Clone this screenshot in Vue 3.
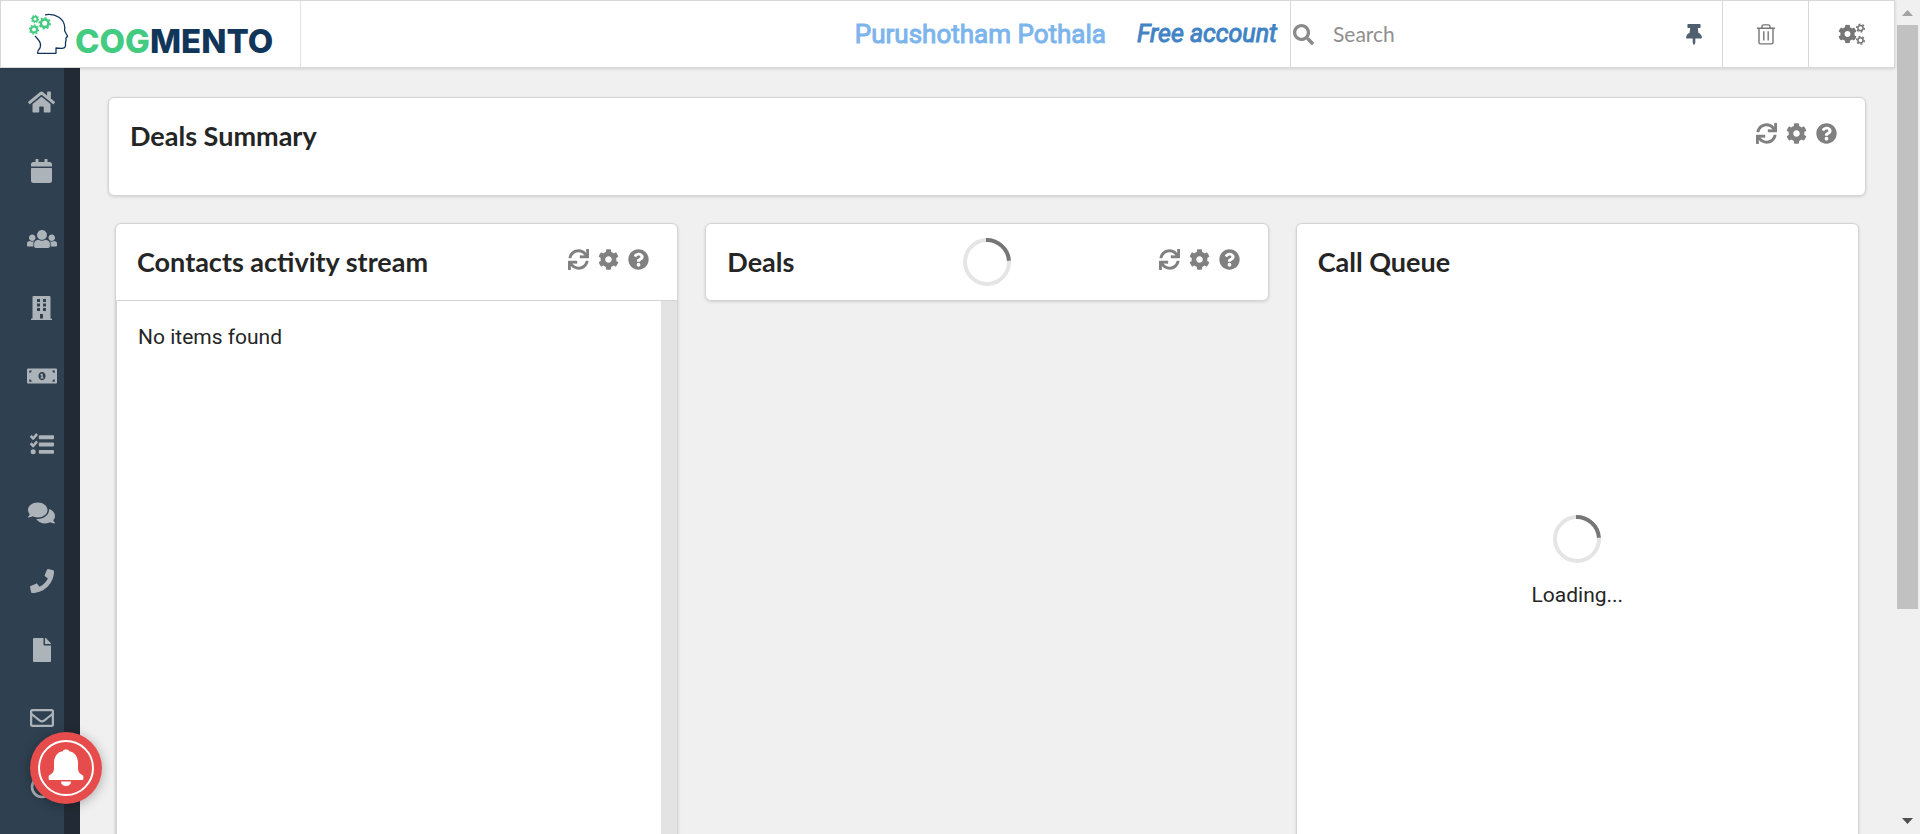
<script setup>
import { ref } from 'vue'

const cog =
  'M444.788 291.1l42.616 24.599c4.867 2.809 7.126 8.618 5.459 13.985-11.07 35.642-29.97 67.842-54.689 94.586a12.016 12.016 0 0 1-14.832 2.254l-42.584-24.595a191.577 191.577 0 0 1-60.759 35.13v49.182a12.01 12.01 0 0 1-9.377 11.718c-34.956 7.85-72.499 8.256-109.219.007-5.49-1.233-9.403-6.096-9.403-11.723v-49.184a191.555 191.555 0 0 1-60.759-35.13l-42.584 24.595a12.016 12.016 0 0 1-14.832-2.254c-24.718-26.744-43.619-58.944-54.689-94.586-1.667-5.366.592-11.175 5.459-13.985L67.212 291.1a193.48 193.48 0 0 1 0-70.199l-42.616-24.599c-4.867-2.809-7.126-8.618-5.459-13.985 11.07-35.642 29.97-67.842 54.689-94.586a12.016 12.016 0 0 1 14.832-2.254l42.584 24.595a191.577 191.577 0 0 1 60.759-35.13V25.759a12.01 12.01 0 0 1 9.377-11.718c34.956-7.85 72.499-8.256 109.219-.007 5.49 1.233 9.403 6.096 9.403 11.723v49.184a191.555 191.555 0 0 1 60.759 35.13l42.584-24.595a12.016 12.016 0 0 1 14.832 2.254c24.718 26.744 43.619 58.944 54.689 94.586 1.667 5.366-.592 11.175-5.459 13.985L444.788 220.9a193.485 193.485 0 0 1 0 70.2zM336 256c0-44.112-35.888-80-80-80s-80 35.888-80 80 35.888 80 80 80 80-35.888 80-80z'

const tools = [
  {
    label: 'Refresh',
    path: 'M440.935 12.574l3.966 82.766C399.416 41.904 331.674 8 256 8 134.813 8 33.933 94.924 12.296 209.824 10.908 217.193 16.604 224 24.103 224h49.084c5.57 0 10.377-3.842 11.676-9.259C103.407 137.408 172.931 80 256 80c60.893 0 114.512 30.856 146.104 77.801l-101.53-4.865c-6.845-.328-12.574 5.133-12.574 11.986v47.411c0 6.627 5.373 12 12 12h200.333c6.627 0 12-5.373 12-12V12c0-6.627-5.373-12-12-12h-47.411c-6.853 0-12.315 5.729-11.987 12.574zM256 432c-60.895 0-114.517-30.858-146.109-77.805l101.868 4.871c6.845.327 12.573-5.134 12.573-11.986v-47.412c0-6.627-5.373-12-12-12H12c-6.627 0-12 5.373-12 12V500c0 6.627 5.373 12 12 12h47.385c6.863 0 12.328-5.745 11.985-12.599l-4.129-82.575C112.725 470.166 180.405 504 256 504c121.187 0 222.067-86.924 243.704-201.824 1.388-7.369-4.308-14.176-11.807-14.176h-49.084c-5.57 0-10.377 3.842-11.676 9.259C408.593 374.592 339.069 432 256 432z'
  },
  { label: 'Settings', path: cog },
  {
    label: 'Help',
    path: 'M504 256c0 136.997-111.043 248-248 248S8 392.997 8 256C8 119.083 119.043 8 256 8s248 111.083 248 248zM262.655 90c-54.497 0-89.255 22.957-116.549 63.758-3.536 5.286-2.353 12.415 2.715 16.258l34.699 26.31c5.205 3.947 12.621 3.008 16.665-2.122 17.864-22.658 30.113-35.797 57.303-35.797 20.429 0 45.698 13.148 45.698 32.958 0 14.976-12.363 22.667-32.534 33.976C247.128 238.528 216 254.941 216 296v4c0 6.627 5.373 12 12 12h56c6.627 0 12-5.373 12-12v-1.333c0-28.462 83.186-29.647 83.186-106.667 0-58.002-60.165-102-116.531-102zM256 338c-25.365 0-46 20.635-46 46 0 25.364 20.635 46 46 46s46-20.636 46-46c0-25.365-20.635-46-46-46z'
  }
]

const nav = [
  {
    label: 'Home',
    w: 576,
    path: 'M280.37 148.26L96 300.11V464a16 16 0 0 0 16 16l112.06-.29a16 16 0 0 0 15.92-16V368a16 16 0 0 1 16-16h64a16 16 0 0 1 16 16v95.64a16 16 0 0 0 16 16.05L464 480a16 16 0 0 0 16-16V300L295.67 148.26a12.19 12.19 0 0 0-15.3 0zM571.6 251.47L488 182.56V44.05a12 12 0 0 0-12-12h-56a12 12 0 0 0-12 12v72.61L318.47 43a48 48 0 0 0-61 0L4.34 251.47a12 12 0 0 0-1.6 16.9l25.5 31A12 12 0 0 0 45.15 301l235.22-193.74a12.19 12.19 0 0 1 15.3 0L530.9 301a12 12 0 0 0 16.9-1.6l25.5-31a12 12 0 0 0-1.7-16.93z'
  },
  {
    label: 'Calendar',
    w: 448,
    path: 'M12 192h424c6.6 0 12 5.4 12 12v260c0 26.5-21.5 48-48 48H48c-26.5 0-48-21.5-48-48V204c0-6.6 5.4-12 12-12zm436-44v-36c0-26.5-21.5-48-48-48h-48V12c0-6.6-5.4-12-12-12h-40c-6.6 0-12 5.4-12 12v52H160V12c0-6.6-5.4-12-12-12h-40c-6.6 0-12 5.4-12 12v52H48C21.5 64 0 85.5 0 112v36c0 6.6 5.4 12 12 12h424c6.6 0 12-5.4 12-12z'
  },
  {
    label: 'Contacts',
    w: 640,
    path: 'M320 64c57.99 0 105 47.01 105 105s-47.01 105-105 105-105-47.01-105-105S262.01 64 320 64zm113.463 217.366l-39.982-9.996c-49.168 35.365-108.766 27.473-146.961 0l-39.982 9.996C174.485 289.379 152 318.177 152 351.216V412c0 19.882 16.118 36 36 36h264c19.882 0 36-16.118 36-36v-60.784c0-33.039-22.485-61.837-54.537-69.85zM528 300c38.66 0 70-31.34 70-70s-31.34-70-70-70-70 31.34-70 70 31.34 70 70 70zm-416 0c38.66 0 70-31.34 70-70s-31.34-70-70-70-70 31.34-70 70 31.34 70 70 70zm24 112v-60.784c0-16.551 4.593-32.204 12.703-45.599-29.988 14.72-63.336 8.708-85.69-7.37l-26.655 6.664C14.99 310.252 0 329.452 0 351.477V392c0 13.255 10.745 24 24 24h112.169a52.417 52.417 0 0 1-.169-4zm467.642-107.09l-26.655-6.664c-27.925 20.086-60.89 19.399-85.786 8.218C499.369 319.893 504 335.39 504 351.216V412c0 1.347-.068 2.678-.169 4H616c13.255 0 24-10.745 24-24v-40.523c0-22.025-14.99-41.225-36.358-46.567z'
  },
  {
    label: 'Companies',
    w: 448,
    path: 'M436 480h-20V24c0-13-11-24-24-24H56C43 0 32 11 32 24v456H12c-7 0-12 5-12 12v20h448v-20c0-7-5-12-12-12zM128 64h64v64h-64zM256 64h64v64h-64zM128 160h64v64h-64zM256 160h64v64h-64zM128 256h64v64h-64zM256 256h64v64h-64zM192 384h64v96h-64z'
  },
  {
    label: 'Deals',
    w: 640,
    path: 'M24 96h592a24 24 0 0 1 24 24v272a24 24 0 0 1-24 24H24a24 24 0 0 1-24-24V120a24 24 0 0 1 24-24zM48 136v52c29 0 52-23 52-52zM540 136c0 29 23 52 52 52v-52zM48 324v52h52c0-29-23-52-52-52zM592 324c-29 0-52 23-52 52h52zM320 168c-44 0-76 40-76 88s32 88 76 88 76-40 76-88-32-88-76-88zM302 206h34v80h18v24h-68v-24h18v-48h-18v-20z'
  },
  {
    label: 'Tasks',
    w: 512,
    path: 'M206 68h288c10 0 18 8 18 18v50c0 10-8 18-18 18H206c-10 0-18-8-18-18V86c0-10 8-18 18-18zM206 226h288c10 0 18 8 18 18v46c0 10-8 18-18 18H206c-10 0-18-8-18-18v-46c0-10 8-18 18-18zM206 384h288c10 0 18 8 18 18v46c0 10-8 18-18 18H206c-10 0-18-8-18-18v-46c0-10 8-18 18-18zM68 368a54 54 0 1 1 0 108 54 54 0 0 1 0-108zM57 166L4 113c-6-6-6-14 0-20l20-20c6-6 14-6 20 0l24 24 54-64c6-6 14-6 20 0l20 20c6 6 6 14 0 20l-82 93c-7 7-16 7-23 0zM57 324L4 271c-6-6-6-14 0-20l20-20c6-6 14-6 20 0l24 24 54-64c6-6 14-6 20 0l20 20c6 6 6 14 0 20l-82 93c-7 7-16 7-23 0z'
  },
  {
    label: 'Conversations',
    w: 576,
    path: 'M416 192c0-88.4-93.1-160-208-160S0 103.6 0 192c0 34.3 14.1 65.9 38 92-13.4 30.2-35.5 54.2-35.8 54.5-2.2 2.3-2.8 5.7-1.5 8.7S4.8 352 8 352c36.6 0 66.9-12.3 88.7-25 32.2 15.7 70.3 25 111.3 25 114.9 0 208-71.6 208-160zm122 220c23.9-26 38-57.7 38-92 0-66.9-53.5-124.2-129.3-148.1.9 6.6 1.3 13.3 1.3 20.1 0 105.9-107.7 192-240 192-10.8 0-21.3-.8-31.7-1.9C207.8 439.6 281.8 480 368 480c41 0 79.1-9.2 111.3-25 21.8 12.7 52.1 25 88.7 25 3.2 0 6.1-1.9 7.3-4.8 1.3-2.9.7-6.3-1.5-8.7-.3-.3-22.4-24.2-35.8-54.5z'
  },
  {
    label: 'Calls',
    w: 512,
    path: 'M493.4 24.6l-104-24c-11.3-2.6-22.9 3.3-27.5 13.9l-48 112c-4.2 9.8-1.4 21.3 6.9 28l60.6 49.6c-36 76.7-98.9 140.5-177.2 177.2l-49.6-60.6c-6.8-8.3-18.2-11.1-28-6.9l-112 48C3.9 366.5-2 378.1.6 389.4l24 104C27.1 504.2 36.7 512 48 512c256.1 0 464-207.5 464-464 0-11.2-7.7-20.9-18.6-23.4z'
  },
  {
    label: 'Documents',
    w: 384,
    path: 'M224 136V0H24C10.7 0 0 10.7 0 24v464c0 13.3 10.7 24 24 24h336c13.3 0 24-10.7 24-24V160H248c-13.2 0-24-10.8-24-24zm160-14.1v6.1H256V0h6.1c6.4 0 12.5 2.5 17 7l97.9 98c4.5 4.5 7 10.6 7 16.9z'
  },
  {
    label: 'Email',
    w: 512,
    path: 'M464 64H48C21.49 64 0 85.49 0 112v288c0 26.51 21.49 48 48 48h416c26.51 0 48-21.49 48-48V112c0-26.51-21.49-48-48-48zm0 48v40.805c-22.422 18.259-58.168 46.651-134.587 106.49-16.841 13.247-50.201 45.072-73.413 44.701-23.208.375-56.579-31.459-73.413-44.701C106.18 199.465 70.425 171.067 48 152.805V112h416zM48 400V214.398c22.914 18.251 55.409 43.862 104.938 82.646 21.857 17.205 60.134 55.186 103.062 54.955 42.717.231 80.509-37.199 103.053-54.947 49.528-38.783 82.032-64.401 104.947-82.653V400H48z'
  },
  {
    label: 'Campaigns',
    w: 512,
    path: 'M256 16a240 240 0 1 0 0 480 240 240 0 0 0 0-480zM256 72a184 184 0 1 1 0 368 184 184 0 0 1 0-368zM256 144a112 112 0 1 0 0 224 112 112 0 0 0 0-224z'
  }
]

const gears = [
  { x: 35, y: 19, r: 2.4, w: 1.8, teeth: 8 },
  { x: 44.7, y: 23.3, r: 3.8, w: 2.6, teeth: 8 },
  { x: 34, y: 29.5, r: 3, w: 2.2, teeth: 8 }
]

const query = ref('')
</script>

<template>
  <div class="page">
    <div class="app">
      <header class="topbar">
        <a class="brand" href="#">
          <svg class="brand-mark" viewBox="28 12 42 44" aria-hidden="true">
            <path
              d="M45 14.8C56 13 64.500 19 64.700 27.500V31L67.600 36.200 66 38V40.500L65.500 42.500V46Q65 48.600 61 48.300L56 48V53.300H37.500Q37.800 50 40 48 41.500 43.500 38.500 40L35 35.800"
              fill="none"
              stroke="#12365a"
              stroke-width="1.3"
              stroke-linejoin="round"
            />
            <g v-for="(g, i) in gears" :key="i" fill="none" stroke="#42cb81">
              <circle :cx="g.x" :cy="g.y" :r="g.r" :stroke-width="g.w" />
              <circle
                :cx="g.x"
                :cy="g.y"
                :r="g.r + g.w / 2 + 0.4"
                :stroke-width="g.w * 0.6"
                :pathLength="g.teeth * 2"
                stroke-dasharray="1"
              />
            </g>
          </svg>
          <span class="brand-name"><span class="brand-green">COG</span>MENTO</span>
        </a>
        <div class="account">
          <span class="user">Purushotham Pothala</span>
          <a class="plan" href="#">Free account</a>
        </div>
        <form class="search" @submit.prevent>
          <svg class="search-icon" viewBox="0 0 512 512" aria-hidden="true">
            <path d="M505 442.7L405.3 343c-4.5-4.5-10.6-7-17-7H372c27.6-35.3 44-79.7 44-128C416 93.1 322.9 0 208 0S0 93.1 0 208s93.1 208 208 208c48.3 0 92.7-16.4 128-44v16.3c0 6.4 2.5 12.5 7 17l99.7 99.7c9.4 9.4 24.6 9.4 33.9 0l28.3-28.3c9.4-9.4 9.4-24.6.1-34zM208 336c-70.7 0-128-57.2-128-128 0-70.7 57.2-128 128-128 70.7 0 128 57.2 128 128 0 70.7-57.2 128-128 128z" />
          </svg>
          <input v-model="query" type="text" placeholder="Search" aria-label="Search" />
          <button class="pin" type="button" aria-label="Pin">
            <svg viewBox="0 0 384 512" aria-hidden="true">
              <path d="M298.028 214.267L285.793 96H328c13.255 0 24-10.745 24-24V24c0-13.255-10.745-24-24-24H56C42.745 0 32 10.745 32 24v48c0 13.255 10.745 24 24 24h42.207L85.972 214.267C37.465 236.82 0 277.261 0 328c0 13.255 10.745 24 24 24h136v104.007c0 1.242.289 2.467.845 3.578l24 48c2.941 5.882 11.364 5.893 14.311 0l24-48a8.008 8.008 0 0 0 .845-3.578V352h136c13.255 0 24-10.745 24-24-.001-51.183-37.983-91.42-85.973-113.733z" />
            </svg>
          </button>
        </form>
        <button class="bar-button" type="button" aria-label="Trash">
          <svg class="trash" viewBox="0 0 18 21" aria-hidden="true">
            <path d="M0 4.300H18M5 4V2.500Q5 .9 6.800 .9H11.200Q13 .9 13 2.500V4M2 4.500V18.500Q2 19.900 3.300 19.900H14.700Q16 19.900 16 18.500V4.500M6.800 7.300V16.500M11.200 7.300V16.500" fill="none" stroke="#767676" stroke-width="1.4" />
          </svg>
        </button>
        <button class="bar-button" type="button" aria-label="Settings">
          <svg class="cogs" viewBox="0 0 27 22" aria-hidden="true">
            <svg x="0" y="1.5" width="19" height="19" viewBox="0 0 512 512"><path :d="cog" /></svg>
            <g fill="none" stroke="#767676">
              <circle cx="22.500" cy="5" r="2.600" stroke-width="1.500" />
              <circle cx="22.500" cy="5" r="3.900" stroke-width="1.300" pathLength="12" stroke-dasharray="1" />
              <circle cx="22.500" cy="17.300" r="2.600" stroke-width="1.500" />
              <circle cx="22.500" cy="17.300" r="3.900" stroke-width="1.300" pathLength="12" stroke-dasharray="1" />
            </g>
          </svg>
        </button>
      </header>

      <div class="body">
        <nav class="sidebar" aria-label="Main">
          <ul class="menu">
            <li v-for="item in nav" :key="item.label">
              <a href="#" :aria-label="item.label">
                <svg :viewBox="`0 0 ${item.w} 512`" height="24" aria-hidden="true">
                  <path :d="item.path" fill-rule="evenodd" />
                </svg>
              </a>
            </li>
          </ul>
        </nav>

        <main class="content">
          <section class="card summary">
            <div class="card-head">
              <h2>Deals Summary</h2>
              <div class="tools">
                <button v-for="t in tools" :key="t.label" type="button" :aria-label="t.label">
                  <svg viewBox="0 0 512 512" aria-hidden="true"><path :d="t.path" /></svg>
                </button>
              </div>
            </div>
          </section>

          <div class="columns">
            <section class="card tall">
              <div class="card-head">
                <h2>Contacts activity stream</h2>
                <div class="tools">
                  <button v-for="t in tools" :key="t.label" type="button" :aria-label="t.label">
                    <svg viewBox="0 0 512 512" aria-hidden="true"><path :d="t.path" /></svg>
                  </button>
                </div>
              </div>
              <div class="stream">
                <p>No items found</p>
                <div class="stream-track"></div>
              </div>
            </section>

            <section class="card">
              <div class="card-head">
                <h2>Deals</h2>
                <div class="tools">
                  <button v-for="t in tools" :key="t.label" type="button" :aria-label="t.label">
                    <svg viewBox="0 0 512 512" aria-hidden="true"><path :d="t.path" /></svg>
                  </button>
                </div>
              </div>
              <div class="overlay"><span class="spinner"></span></div>
            </section>

            <section class="card tall">
              <div class="card-head">
                <h2>Call Queue</h2>
              </div>
              <div class="loading">
                <span class="spinner"></span>
                <p>Loading...</p>
              </div>
            </section>
          </div>
        </main>
      </div>
    </div>

    <div class="scrollbar" aria-hidden="true">
      <svg viewBox="0 0 25 25"><path d="M7 16L12.500 10 18 16z" fill="#a3a3a3" /></svg>
      <div class="scroll-track"><div class="scroll-thumb"></div></div>
      <svg viewBox="0 0 25 25"><path d="M7 9L12.500 15 18 9z" fill="#505050" /></svg>
    </div>

    <button class="bell" type="button" aria-label="Notifications">
      <svg viewBox="0 0 72 72" aria-hidden="true">
        <circle cx="36" cy="36" r="27" fill="none" stroke="#fff" stroke-width="2" />
        <path d="M36 17.500c-2 0-2.800.7-3.200 1.700C27 20 24 25 24 31v5c0 4-1.500 5.500-5 7.500-.6.5-.4 4 0 4.500h34c.5-.5.600-4 0-4.500-3.500-2-5-3.500-5-7.500v-5c0-6-3-11-8.800-11.800-.4-1-1.200-1.700-3.200-1.700zM31 49.500h10c0 2.800-2 4.500-5 4.500s-5-1.700-5-4.500z" fill="#fff" />
      </svg>
    </button>
  </div>
</template>

<style>
body {
  margin: 0;
  background: #f0f0f0;
}
</style>

<style scoped>
.page {
  display: flex;
  height: 100vh;
  overflow: hidden;
  background: #f0f0f0;
  color: #252525;
  font-family: Roboto, "Liberation Sans", sans-serif;
  font-size: 21px;
  line-height: 30px;
}

.page *,
.page *::before {
  box-sizing: border-box;
}

button {
  padding: 0;
  border: 0;
  background: none;
  cursor: pointer;
}

svg {
  display: block;
  flex: none;
}

a {
  color: inherit;
  text-decoration: none;
}

.app {
  display: flex;
  flex: 1;
  flex-direction: column;
  min-width: 0;
}

.topbar {
  position: relative;
  z-index: 1;
  display: flex;
  flex: none;
  height: 68px;
  border: 1px solid #d8d8d8;
  background: #fff;
  box-shadow: 0 1px 3px rgba(34, 36, 38, 0.15);
}

.brand {
  display: flex;
  align-items: center;
  gap: 5px;
  width: 300px;
  padding-left: 27px;
  border-right: 1px solid #e2e2e2;
}

.brand-mark {
  width: 42px;
  height: 44px;
}

.brand-name {
  padding-top: 14px;
  color: #12365a;
  font: 800 33px/40px Inter, sans-serif;
}

.brand-green {
  color: #42cb81;
}

.account {
  display: flex;
  flex: 1;
  align-items: center;
  justify-content: flex-end;
  gap: 31px;
  padding-right: 13px;
  font-size: 26px;
  white-space: nowrap;
  -webkit-text-stroke: 1px currentColor;
}

.user {
  color: #7cb5ec;
}

.plan {
  color: #4183c4;
  font-size: 25px;
  font-style: italic;
}

.search {
  display: flex;
  align-items: center;
  width: 432px;
  border-left: 1px solid #d8d8d8;
}

.search-icon {
  width: 21px;
  height: 21px;
  margin-left: 2px;
  fill: #8a8a8a;
}

input {
  flex: 1;
  min-width: 0;
  height: 40px;
  padding: 0 19px 2px;
  border: 0;
  outline: 0;
  background: none;
  color: #252525;
  font: 21px/30px Lato, sans-serif;
}

input::placeholder {
  color: #8f8f8f;
  opacity: 1;
}

.pin {
  margin-right: 20px;
}

.pin svg {
  width: 16px;
  height: 21px;
  fill: #4f5f6f;
}

.bar-button {
  display: flex;
  align-items: center;
  justify-content: center;
  width: 86px;
  border-left: 1px solid #d8d8d8;
}

.trash {
  width: 18px;
  height: 21px;
}

.cogs {
  width: 27px;
  height: 22px;
  fill: #767676;
}

.body {
  display: flex;
  flex: 1;
  min-height: 0;
}

.sidebar {
  display: flex;
  width: 80px;
  padding-bottom: 13px;
  background: linear-gradient(to right, #2f4050 64px, #222b35 64px);
}

.menu {
  display: flex;
  flex: 1;
  flex-direction: column;
  margin: 0;
  padding: 0;
  list-style: none;
}

.menu li {
  display: flex;
  flex: 1;
}

.menu a {
  display: flex;
  flex: 1;
  align-items: center;
  justify-content: center;
  padding-left: 3px;
}

.menu svg {
  fill: #acb3b9;
}

.content {
  flex: 1;
  min-width: 0;
  padding: 29px 29px 0 28px;
  overflow: hidden;
}

.card {
  position: relative;
  border: 1px solid #d4d4d5;
  border-radius: 6px;
  background: #fff;
  box-shadow: 0 1px 3px rgba(34, 36, 38, 0.15);
}

.summary {
  min-height: 99px;
  margin-bottom: 27px;
}

.card-head {
  display: flex;
  justify-content: space-between;
  height: 76px;
  padding: 0 28px 0 21px;
}

h2 {
  margin: 0;
  padding-top: 21px;
  font: 700 27px/34px Lato, sans-serif;
  white-space: nowrap;
}

.tools {
  display: flex;
  align-items: flex-start;
  gap: 9px;
  padding-top: 25px;
}

.tools svg {
  width: 21px;
  height: 21px;
  fill: #808080;
}

.columns {
  display: grid;
  grid-template-columns: repeat(3, 1fr);
  align-items: start;
  gap: 27px;
  padding: 0 7px;
}

.tall {
  display: flex;
  flex-direction: column;
  min-height: 100vh;
}

.stream {
  display: flex;
  flex: 1;
  justify-content: space-between;
  border-top: 1px solid #d4d4d5;
  border-left: 1px solid #d4d4d5;
}

.stream p {
  margin: 0;
  padding: 21px;
}

.stream-track {
  width: 16px;
  background: #e3e3e3;
}

.overlay {
  position: absolute;
  inset: 0;
  display: flex;
  align-items: center;
  justify-content: center;
  pointer-events: none;
}

.spinner {
  width: 48px;
  height: 48px;
  border: 4px solid #e5e5e5;
  border-top-color: #767676;
  border-radius: 50%;
  transform: rotate(42deg);
}

.loading {
  display: flex;
  flex-direction: column;
  align-items: center;
  gap: 17px;
  padding-top: 215px;
}

.loading p {
  margin: 0;
}

.scrollbar {
  display: flex;
  flex: none;
  flex-direction: column;
  width: 25px;
  background: #f0f0f0;
}

.scrollbar svg {
  width: 25px;
  height: 25px;
}

.scroll-track {
  flex: 1;
  padding: 0 2px;
}

.scroll-thumb {
  height: 74.5%;
  background: #c1c1c1;
}

.bell {
  position: fixed;
  z-index: 2;
  bottom: 30px;
  left: 30px;
  border-radius: 50%;
  background: #e64c4c;
  box-shadow: 0 2px 12px rgba(0, 0, 0, 0.3);
}

.bell svg {
  width: 72px;
  height: 72px;
}
</style>
